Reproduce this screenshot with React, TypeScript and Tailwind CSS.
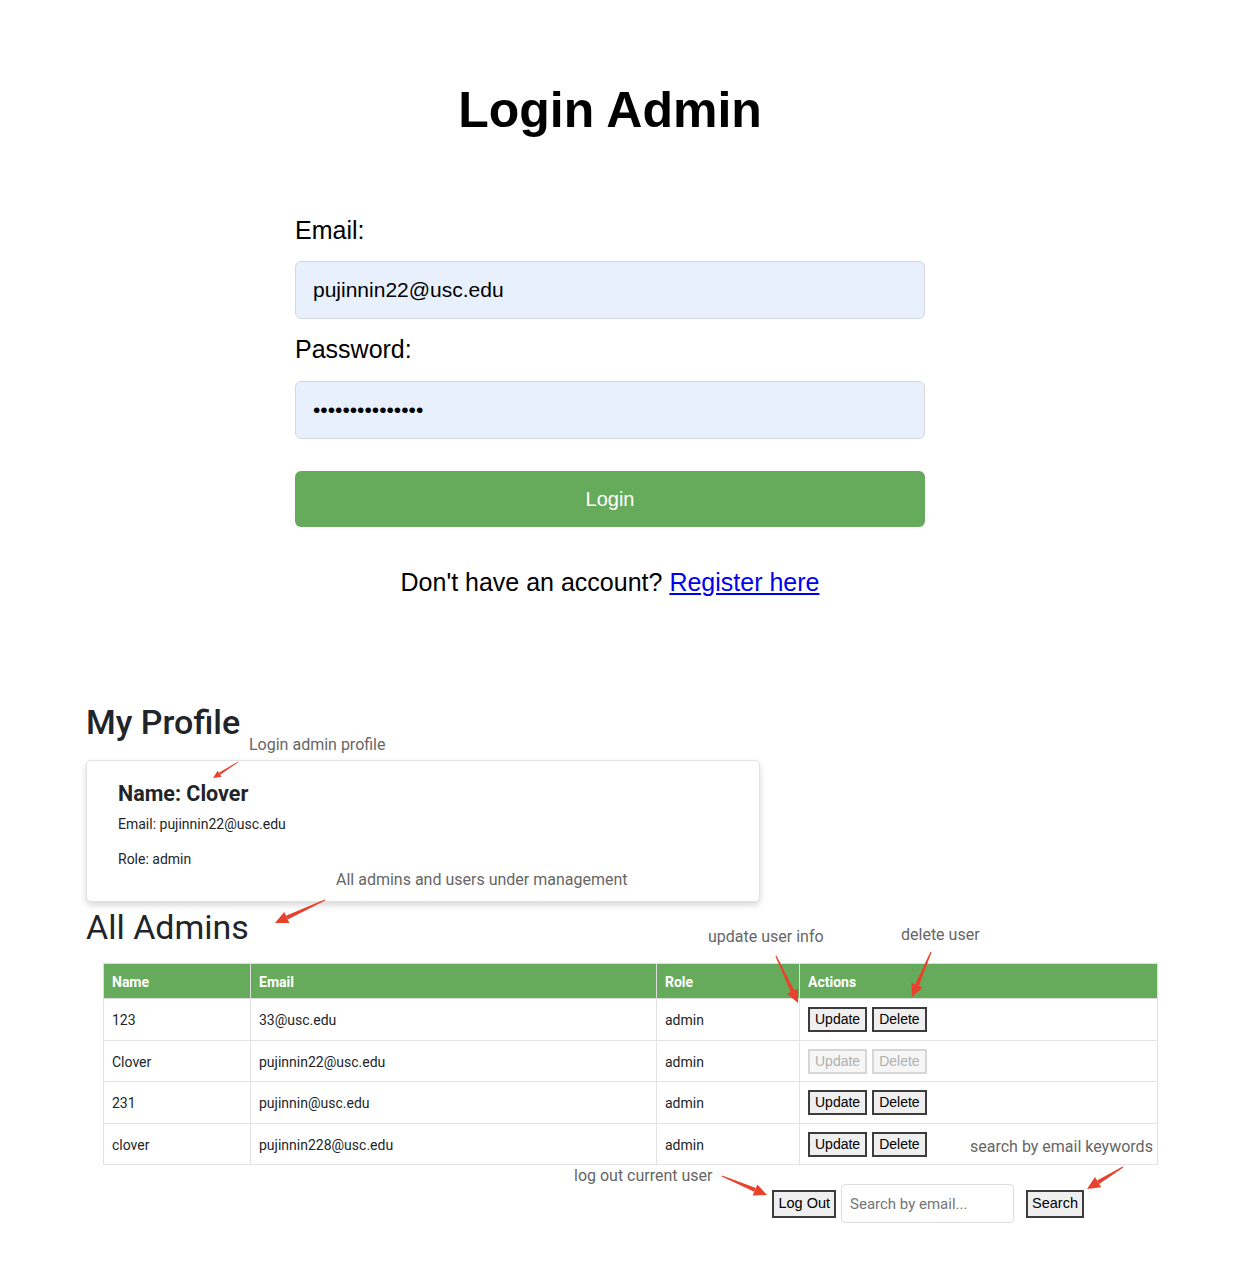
import type { FC } from 'react';

type User = { name: string; email: string; role: string; self?: boolean };

const users: User[] = [
  { name: '123', email: '33@usc.edu', role: 'admin' },
  { name: 'Clover', email: 'pujinnin22@usc.edu', role: 'admin', self: true },
  { name: '231', email: 'pujinnin@usc.edu', role: 'admin' },
  { name: 'clover', email: 'pujinnin228@usc.edu', role: 'admin' },
];

// annotation arrows drawn on top of the screenshot: [x1, y1, x2, y2, scale]
const arrows: number[][] = [
  [238, 762, 213, 778, 0.6],
  [325, 900, 275, 923, 1],
  [776, 956, 798, 1003, 1],
  [931, 952, 912, 997, 1],
  [1123, 1167, 1087, 1189, 1],
  [722, 1176, 767, 1195, 1],
];

const Arrow: FC<{ a: number[] }> = ({ a }) => {
  const [x1, y1, x2, y2, s] = a;
  const len = Math.hypot(x2 - x1, y2 - y1);
  const ux = (x2 - x1) / len;
  const uy = (y2 - y1) / len;
  const px = -uy;
  const py = ux;
  const head = 13 * s;
  const hw = 6 * s;
  const bx = x2 - ux * head;
  const by = y2 - uy * head;
  const tw = 0.6 * s;
  const sw = 2 * s;
  const shaft = [
    [x1 + px * tw, y1 + py * tw],
    [bx + px * sw, by + py * sw],
    [bx - px * sw, by - py * sw],
    [x1 - px * tw, y1 - py * tw],
  ];
  const tip = [
    [x2, y2],
    [bx + px * hw, by + py * hw],
    [bx - px * hw, by - py * hw],
  ];
  const pts = (p: number[][]) => p.map((q) => q.join(',')).join(' ');
  return (
    <g fill="#e8412c">
      <polygon points={pts(shaft)} />
      <polygon points={pts(tip)} />
    </g>
  );
};

const Note: FC<{ text: string; className: string }> = ({ text, className }) => (
  <span
    className={`absolute text-[16px] leading-[20px] text-[#666] whitespace-nowrap font-['Roboto',sans-serif] ${className}`}
  >
    {text}
  </span>
);

const Btn: FC<{ label: string; disabled?: boolean; big?: boolean }> = ({
  label,
  disabled,
  big,
}) => (
  <button
    disabled={disabled}
    className={`font-['Liberation_Sans',Arial,sans-serif] border-2 ${
      big ? 'h-[28px] px-[4px] text-[14.5px]' : 'h-[25px] px-[5px] text-[14px]'
    } ${
      disabled
        ? 'bg-[#f6f6f6] border-[#d6d6d6] text-[#b0b0b0]'
        : 'bg-[#efefef] border-[#3c3c3c] text-black'
    }`}
  >
    {label}
  </button>
);

export default function App() {
  return (
    <div className="relative w-[1256px] min-h-[1280px] bg-white overflow-hidden">
      <section className="w-[1220px] pt-[85px] flex flex-col items-center text-black font-['Liberation_Sans',Arial,sans-serif]">
        <h1 className="text-[50px] leading-[50px] font-bold">Login Admin</h1>
        <form className="w-[630px] mt-[80px] flex flex-col">
          <label className="text-[25px] leading-[30px]">Email:</label>
          <input
            readOnly
            defaultValue="pujinnin22@usc.edu"
            className="mt-4 h-[58px] pl-[17px] text-[21px] bg-[#e8f0fe] border border-[#d4d7dc] rounded-[6px] outline-none"
          />
          <label className="mt-[15px] text-[25px] leading-[30px]">Password:</label>
          <input
            readOnly
            type="password"
            defaultValue="xxxxxxxxxxxxxxx"
            className="mt-[17px] h-[58px] pl-[17px] text-[21px] bg-[#e8f0fe] border border-[#d4d7dc] rounded-[6px] outline-none"
          />
          <button
            type="button"
            className="mt-8 h-[56px] rounded-[6px] bg-[#66ab5c] text-white text-[20px]"
          >
            Login
          </button>
        </form>
        <p className="mt-[40px] text-[25px] leading-[30px]">
          Don't have an account?{' '}
          <a href="#" className="text-[#0000ee] underline">
            Register here
          </a>
        </p>
      </section>

      <section className="mt-[105px] pl-[86px] text-[#212529] font-['Roboto',sans-serif]">
        <h2 className="text-[34px] leading-[41px] font-medium">My Profile</h2>
        <div className="mt-[17px] w-[674px] bg-white border border-[#e2e2e2] rounded-[5px] shadow-[0_3px_6px_rgba(0,0,0,0.16)] pt-[20px] pb-[31px] px-[31px]">
          <h3 className="text-[21.5px] leading-[25px] font-bold">Name: Clover</h3>
          <p className="mt-2 text-[14px] leading-[21px]">Email: pujinnin22@usc.edu</p>
          <p className="mt-[14px] text-[14px] leading-[21px]">Role: admin</p>
        </div>
        <h2 className="mt-[5px] text-[34px] leading-[41px]">All Admins</h2>

        <table className="mt-[15px] ml-[17px] w-[1054px] table-fixed border-collapse text-[14px]">
          <colgroup>
            <col className="w-[147px]" />
            <col className="w-[406px]" />
            <col className="w-[143px]" />
            <col className="w-[358px]" />
          </colgroup>
          <thead>
            <tr className="h-[35px] bg-[#66ab5c] text-white text-left">
              {['Name', 'Email', 'Role', 'Actions'].map((h) => (
                <th key={h} className="px-2 pt-[2px] font-bold border border-[#ddd]">
                  {h}
                </th>
              ))}
            </tr>
          </thead>
          <tbody>
            {users.map((u) => (
              <tr key={u.email} className="h-[41.5px]">
                <td className="px-2 pt-[3px] border border-[#e3e3e3]">{u.name}</td>
                <td className="px-2 pt-[3px] border border-[#e3e3e3]">{u.email}</td>
                <td className="px-2 pt-[3px] border border-[#e3e3e3]">{u.role}</td>
                <td className="px-2 pt-[1px] border border-[#e3e3e3]">
                  <div className="flex gap-[5px]">
                    <Btn label="Update" disabled={u.self} />
                    <Btn label="Delete" disabled={u.self} />
                  </div>
                </td>
              </tr>
            ))}
          </tbody>
        </table>
      </section>

      <div className="mt-[19px] flex items-center justify-end pr-[172px] font-['Roboto',sans-serif]">
        <Btn label="Log Out" big />
        <input
          placeholder="Search by email..."
          className="ml-[5px] w-[173px] h-[39px] px-[8px] text-[15px] border border-[#dcdcdc] rounded-[4px] outline-none placeholder:text-[#757575]"
        />
        <div className="ml-[12px]">
          <Btn label="Search" big />
        </div>
      </div>

      <Note text="Login admin profile" className="left-[249px] top-[735px]" />
      <Note text="All admins and users under management" className="left-[336px] top-[870px]" />
      <Note text="update user info" className="left-[708px] top-[927px]" />
      <Note text="delete user" className="left-[901px] top-[925px]" />
      <Note text="search by email keywords" className="left-[970px] top-[1137px]" />
      <Note text="log out current user" className="left-[574px] top-[1166px]" />

      <svg
        className="absolute left-0 top-0 pointer-events-none"
        width={1256}
        height={1280}
        viewBox="0 0 1256 1280"
      >
        {arrows.map((a, i) => (
          <Arrow key={i} a={a} />
        ))}
      </svg>
    </div>
  );
}
